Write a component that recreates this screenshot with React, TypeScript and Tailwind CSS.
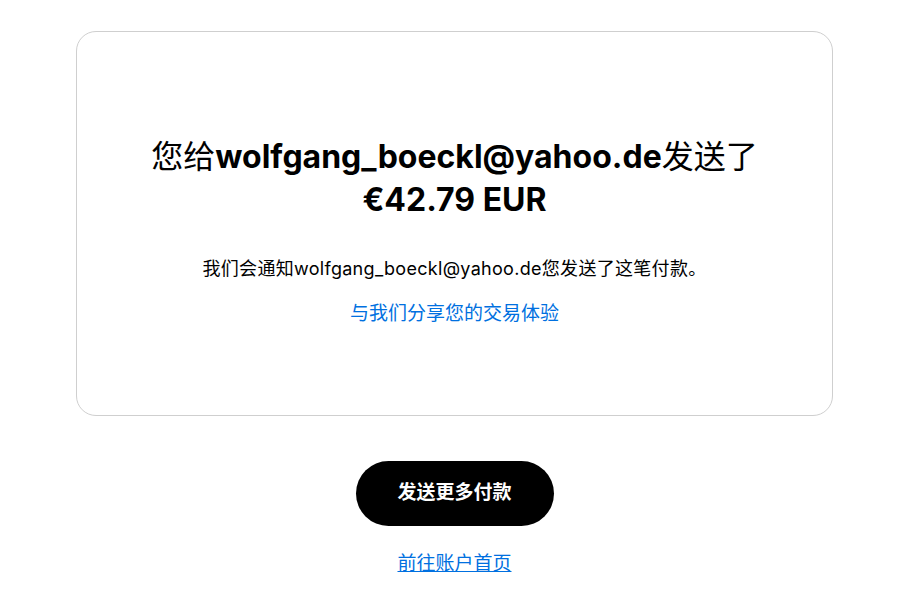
import React from "react";

const App = () => {
  return (
    <div
      className="min-h-[610px] w-full bg-white flex flex-col items-center pt-[31px]"
      style={{ fontFamily: "Inter, 'Noto Sans CJK SC', sans-serif" }}
    >
      <div className="w-[757px] h-[385px] border border-[#cfcfcf] rounded-[20px] flex flex-col items-center justify-center pt-[16px]">
        <h1 className="text-[32px] leading-[43px] text-black text-center font-normal">
          您给<span className="font-bold">wolfgang_boeckl@yahoo.de</span>发送了
          <br />
          <span className="font-bold">€42.79 EUR</span>
        </h1>
        <p className="mt-[34px] text-[18px] tracking-[0.3px] text-black">
          我们会通知wolfgang_boeckl@yahoo.de您发送了这笔付款。
        </p>
        <a href="#" className="mt-[18px] text-[19px] text-[#0070e0]">
          与我们分享您的交易体验
        </a>
      </div>
      <button className="mt-[45px] w-[198px] h-[65px] rounded-full bg-black text-white text-[19px] font-semibold">
        发送更多付款
      </button>
      <a href="#" className="mt-[24px] text-[19px] text-[#0070e0] underline">
        前往账户首页
      </a>
    </div>
  );
};

export default App;
